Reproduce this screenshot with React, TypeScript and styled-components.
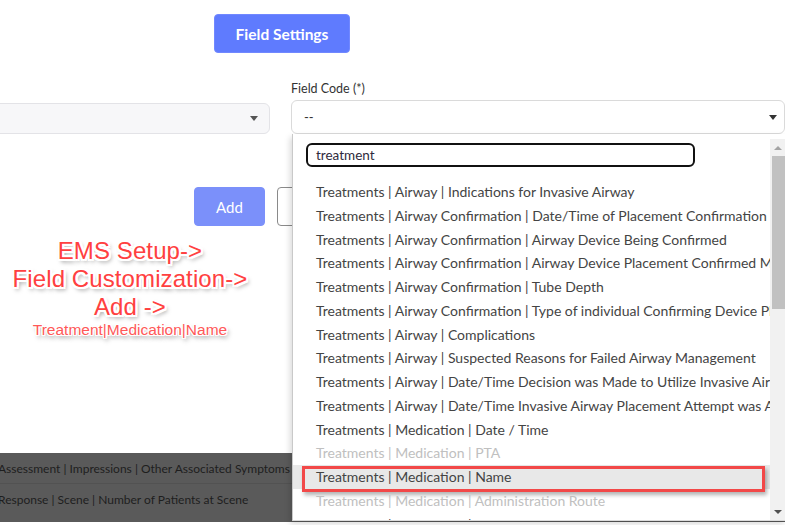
import React from "react";
import styled, { createGlobalStyle, css } from "styled-components";

const GlobalStyle = createGlobalStyle`
  html, body { margin: 0; padding: 0; background: #fff; }
  body { font-family: Lato, "Noto Sans", sans-serif; }
  * { box-sizing: border-box; }
`;

const Page = styled.div`
  width: 785px;
  height: 525px;
  position: relative;
  overflow: hidden;
  display: flex;
  flex-direction: column;
  padding-bottom: 3px;
  background: #fff;
`;

const TopBar = styled.div`
  display: flex;
  padding: 14px 0 0 214px;
`;

const PrimaryButton = styled.button<{ $w: number; $light?: boolean }>`
  width: ${(p) => p.$w}px;
  height: 39px;
  border-radius: 4px;
  border: 1px solid ${(p) => (p.$light ? "#7b90fa" : "#7188ff")};
  background: ${(p) => (p.$light ? "#7b90fa" : "#5f7bfe")};
  color: #fff;
  font-family: Lato, sans-serif;
  font-size: ${(p) => (p.$light ? 15 : 15.5)}px;
  font-weight: ${(p) => (p.$light ? 400 : 700)};
  padding: 0;
  cursor: pointer;
`;

const OutlineButton = styled.button`
  width: 80px;
  height: 39px;
  border-radius: 4px;
  border: 1px solid #8a8a8a;
  background: #fff;
  flex-shrink: 0;
`;

const FormRow = styled.div`
  display: grid;
  grid-template-columns: 271px 494px;
  column-gap: 20px;
  margin-top: 28px;
`;

const LeftCol = styled.div`
  padding-top: 22px;
`;

const Caret = styled.span<{ $color: string }>`
  width: 0;
  height: 0;
  border-left: 4px solid transparent;
  border-right: 4px solid transparent;
  border-top: 5px solid ${(p) => p.$color};
`;

const GraySelect = styled.div`
  margin-left: -10px;
  width: 280px;
  height: 31px;
  background: #f7f7f9;
  border: 1px solid #e3e3e7;
  border-radius: 6px;
  display: flex;
  align-items: center;
  justify-content: flex-end;
  padding-right: 11px;
`;

const RightCol = styled.div`
  position: relative;
  display: flex;
  flex-direction: column;
`;

const Label = styled.div`
  font-size: 12.5px;
  line-height: 15px;
  color: #333;
  margin-bottom: 4px;
`;

const WhiteSelect = styled.div`
  position: relative;
  height: 34px;
  width: 494px;
  border: 1px solid #dadada;
  border-radius: 6px;
  display: flex;
  align-items: center;
  justify-content: space-between;
  padding: 0 7px 0 12px;
  font-size: 13px;
  color: #333;
`;

const Panel = styled.div`
  position: absolute;
  top: calc(100% + 1px);
  left: 0;
  width: 494px;
  height: 387px;
  background: #fff;
  border-left: 1px solid #c9c9c9;
  border-bottom: 1px solid #dcdcdc;
  box-shadow: -2px 3px 6px rgba(0, 0, 0, 0.15);
  display: flex;
  z-index: 10;
`;

const ListArea = styled.div`
  flex: 1;
  min-width: 0;
  overflow: hidden;
  display: flex;
  flex-direction: column;
`;

const SearchBox = styled.div`
  margin: 9px 0 0 13px;
  width: 389px;
  height: 24px;
  border: 2px solid #111;
  border-radius: 6px;
  padding-left: 8px;
  display: flex;
  align-items: center;
  font-size: 13.5px;
  color: #2e2a3c;
  flex-shrink: 0;
`;

const Items = styled.div`
  margin-top: 13px;
  display: flex;
  flex-direction: column;
`;

const Item = styled.div<{ $disabled?: boolean; $active?: boolean }>`
  position: relative;
  height: 23.75px;
  line-height: 23.75px;
  flex-shrink: 0;
  padding-left: 23px;
  font-size: 14px;
  white-space: nowrap;
  color: ${(p) => (p.$disabled ? "#c0c0c0" : "#444")};
  ${(p) =>
    p.$active &&
    css`
      background: #e8e8e8;
      &::after {
        content: "";
        position: absolute;
        top: 1px;
        left: 9px;
        right: 5px;
        bottom: -3px;
        border: 3px solid #f24848;
        box-shadow: 2px 3px 4px rgba(0, 0, 0, 0.3);
      }
    `}
`;

const ScrollBar = styled.div`
  width: 16px;
  margin-top: 5px;
  background: #f1f1f1;
  display: flex;
  flex-direction: column;
  align-items: center;
`;

const ScrollArrow = styled.div`
  height: 17px;
  width: 100%;
  display: flex;
  align-items: center;
  justify-content: center;
  flex-shrink: 0;
`;

const Up = styled.span`
  width: 0;
  height: 0;
  border-left: 4px solid transparent;
  border-right: 4px solid transparent;
  border-bottom: 4px solid #a3a3a3;
`;

const Down = styled.span`
  width: 0;
  height: 0;
  border-left: 4px solid transparent;
  border-right: 4px solid transparent;
  border-top: 4px solid #505050;
`;

const Thumb = styled.div`
  width: 13px;
  height: 153px;
  background: #c1c1c1;
  flex-shrink: 0;
`;

const Track = styled.div`
  flex: 1;
`;

const ActionsRow = styled.div`
  display: flex;
  gap: 12px;
  margin-top: 53px;
  padding-left: 194px;
`;

const Annotation = styled.div`
  width: 260px;
  margin-top: 11px;
  text-align: center;
  font-family: "Liberation Sans", Arial, sans-serif;
  color: #ff4343;
`;

const outline = (w: number) => `
  ${w}px 0 0 #fff, -${w}px 0 0 #fff, 0 ${w}px 0 #fff, 0 -${w}px 0 #fff,
  ${w}px ${w}px 0 #fff, -${w}px -${w}px 0 #fff, ${w}px -${w}px 0 #fff, -${w}px ${w}px 0 #fff
`;

const AnnoLine = styled.div<{ $small?: boolean }>`
  font-size: ${(p) => (p.$small ? 15.5 : 24)}px;
  line-height: ${(p) => (p.$small ? 18 : 28)}px;
  color: ${(p) => (p.$small ? "#ff5858" : "#ff4040")};
  white-space: nowrap;
  letter-spacing: ${(p) => (p.$small ? 0 : 0.1)}px;
  text-shadow: ${(p) => outline(p.$small ? 1.2 : 2)}, 2px 3px 4px rgba(0, 0, 0, 0.5);
`;

const Band = styled.div`
  margin-top: auto;
  height: 69px;
  background: #5a5a5a;
  display: flex;
  flex-direction: column;
`;

const BandRow = styled.div<{ $h: number }>`
  height: ${(p) => p.$h}px;
  padding: 8px 0 0 0;
  margin-left: -2px;
  font-size: 12px;
  line-height: 15px;
  color: #1e1e1e;
  white-space: nowrap;
  & + & {
    border-top: 1px solid #525252;
    padding-top: 8px;
  }
`;

const items: { t: string; d?: boolean; a?: boolean }[] = [
  { t: "Treatments | Airway | Indications for Invasive Airway" },
  { t: "Treatments | Airway Confirmation | Date/Time of Placement Confirmation" },
  { t: "Treatments | Airway Confirmation | Airway Device Being Confirmed" },
  { t: "Treatments | Airway Confirmation | Airway Device Placement Confirmed Method" },
  { t: "Treatments | Airway Confirmation | Tube Depth" },
  { t: "Treatments | Airway Confirmation | Type of individual Confirming Device Placement" },
  { t: "Treatments | Airway | Complications" },
  { t: "Treatments | Airway | Suspected Reasons for Failed Airway Management" },
  { t: "Treatments | Airway | Date/Time Decision was Made to Utilize Invasive Airway" },
  { t: "Treatments | Airway | Date/Time Invasive Airway Placement Attempt was Abandoned" },
  { t: "Treatments | Medication | Date / Time" },
  { t: "Treatments | Medication | PTA", d: true },
  { t: "Treatments | Medication | Name", a: true },
  { t: "Treatments | Medication | Administration Route", d: true },
  { t: "Treatments | Medication | Dosage" },
];

export default function App() {
  return (
    <Page>
      <GlobalStyle />
      <TopBar>
        <PrimaryButton $w={136}>Field Settings</PrimaryButton>
      </TopBar>
      <FormRow>
        <LeftCol>
          <GraySelect>
            <Caret $color="#555" />
          </GraySelect>
        </LeftCol>
        <RightCol>
          <Label>Field Code (*)</Label>
          <WhiteSelect>
            <span>--</span>
            <Caret $color="#333" />
            <Panel>
              <ListArea>
                <SearchBox>treatment</SearchBox>
                <Items>
                  {items.map((it, i) => (
                    <Item key={i} $disabled={it.d} $active={it.a}>
                      {it.t}
                    </Item>
                  ))}
                </Items>
              </ListArea>
              <ScrollBar>
                <ScrollArrow>
                  <Up />
                </ScrollArrow>
                <Thumb />
                <Track />
                <ScrollArrow>
                  <Down />
                </ScrollArrow>
              </ScrollBar>
            </Panel>
          </WhiteSelect>
        </RightCol>
      </FormRow>
      <ActionsRow>
        <PrimaryButton $w={71} $light>
          Add
        </PrimaryButton>
        <OutlineButton />
      </ActionsRow>
      <Annotation>
        <AnnoLine>EMS Setup-&gt;</AnnoLine>
        <AnnoLine>Field Customization-&gt;</AnnoLine>
        <AnnoLine>Add -&gt;</AnnoLine>
        <AnnoLine $small>Treatment|Medication|Name</AnnoLine>
      </Annotation>
      <Band>
        <BandRow $h={30}>Assessment | Impressions | Other Associated Symptoms</BandRow>
        <BandRow $h={39}>Response | Scene | Number of Patients at Scene</BandRow>
      </Band>
    </Page>
  );
}
